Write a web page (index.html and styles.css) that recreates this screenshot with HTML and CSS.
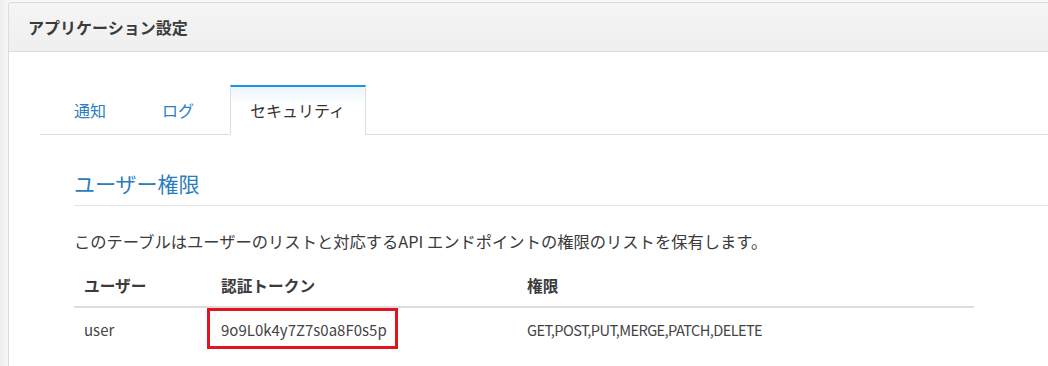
FILE: index.html
```html
<!DOCTYPE html>
<html lang="ja">
	<head>
		<meta charset="UTF-8">
		<title>アプリケーション設定</title>
		<link rel="stylesheet" href="styles.css">
	</head>
	<body>
		<div class="panel">
			<div class="panel-heading">アプリケーション設定</div>
			<div class="panel-body">
				<ul class="tabs">
					<li><a href="#">通知</a></li>
					<li><a href="#">ログ</a></li>
					<li class="active"><a href="#">セキュリティ</a></li>
				</ul>
				<div class="section">
					<h2>ユーザー権限</h2>
					<p>このテーブルはユーザーのリストと対応するAPI エンドポイントの権限のリストを保有します。</p>
					<table class="grid">
						<thead>
							<tr>
								<th class="col-user">ユーザー</th>
								<th class="col-token">認証トークン</th>
								<th>権限</th>
							</tr>
						</thead>
						<tbody>
							<tr>
								<td>user</td>
								<td><span class="token">9o9L0k4y7Z7s0a8F0s5p</span></td>
								<td class="perm">GET,POST,PUT,MERGE,PATCH,DELETE</td>
							</tr>
						</tbody>
					</table>
				</div>
			</div>
		</div>
	</body>
</html>
```

FILE: styles.css
```css
/* common */
html, body {
	margin: 0; padding: 0; height: 100%; overflow: hidden;
}
body {
	background: linear-gradient(to right, #eeeeee, #f7f7f7 8px); padding-top: 2px; box-sizing: border-box;
	font-family: "Noto Sans CJK JP", "Noto Sans", sans-serif; font-size: 16px; color: #333;
}
* {
	box-sizing: border-box;
}
a {
	text-decoration: none;
}
/* panel */
.panel {
	margin-left: 8px; width: 1060px; height: 100%; background-color: white; border: 1px solid #dcdcdc; border-bottom: none; border-radius: 4px 0 0 0;
}
.panel-heading {
	height: 49px; line-height: 48px; padding: 0 19px; font-size: 16px; font-weight: bold; color: #3b3b3b;
	background: linear-gradient(to bottom, #f5f5f5, #efefef); border-bottom: 1px solid #dcdcdc; border-radius: 4px 0 0 0;
}
.panel-body {
	padding: 33px 0 0 31px;
}
/* tabs */
.tabs {
	list-style: none; margin: 0; padding: 0 0 0 14px; display: flex; border-bottom: 1px solid #dddddd;
}
.tabs li {
	margin-right: 15px; margin-bottom: -1px;
}
.tabs a {
	display: block; padding: 0 20px 0 19px; height: 50px; line-height: 47px; font-size: 16px; color: #2b7fc3;
	border: 1px solid transparent; border-top-width: 2px;
}
.tabs .active a {
	color: #333; background: linear-gradient(to bottom, #eaf5fd, white 18px);
	border-color: #dddddd; border-top-color: #1b95e0; border-bottom-color: white;
}
/* section */
.section {
	padding-left: 34px;
}
h2 {
	margin: 33px 0 0; padding-bottom: 7px; font-size: 21px; line-height: 30px; font-weight: normal; color: #2a7dbd;
	border-bottom: 1px solid #e5e5e5;
}
p {
	margin: 23px 0 0; line-height: 24px; font-size: 16.3px; color: #3a3a3a;
}
/* table */
.grid {
	margin-top: 11px; width: 900px; border-collapse: collapse; font-size: 15px;
}
.grid th, .grid td {
	text-align: left; padding: 10px 10px 8px; line-height: 24px;
}
.grid th {
	font-size: 15.7px; font-weight: bold; color: #3b3b3b; border-bottom: 2px solid #dddddd;
}
.grid td {
	padding: 10px 10px 9px; color: #444;
}
.grid td.perm {
	font-size: 14.6px; letter-spacing: -0.6px;
}
.col-user {
	width: 137px;
}
.col-token {
	width: 306px;
}
.token {
	padding: 8px 8px 6px 11px; margin: 0 -11px 0 -14px; border: 3px solid #e3141e;
}
```
